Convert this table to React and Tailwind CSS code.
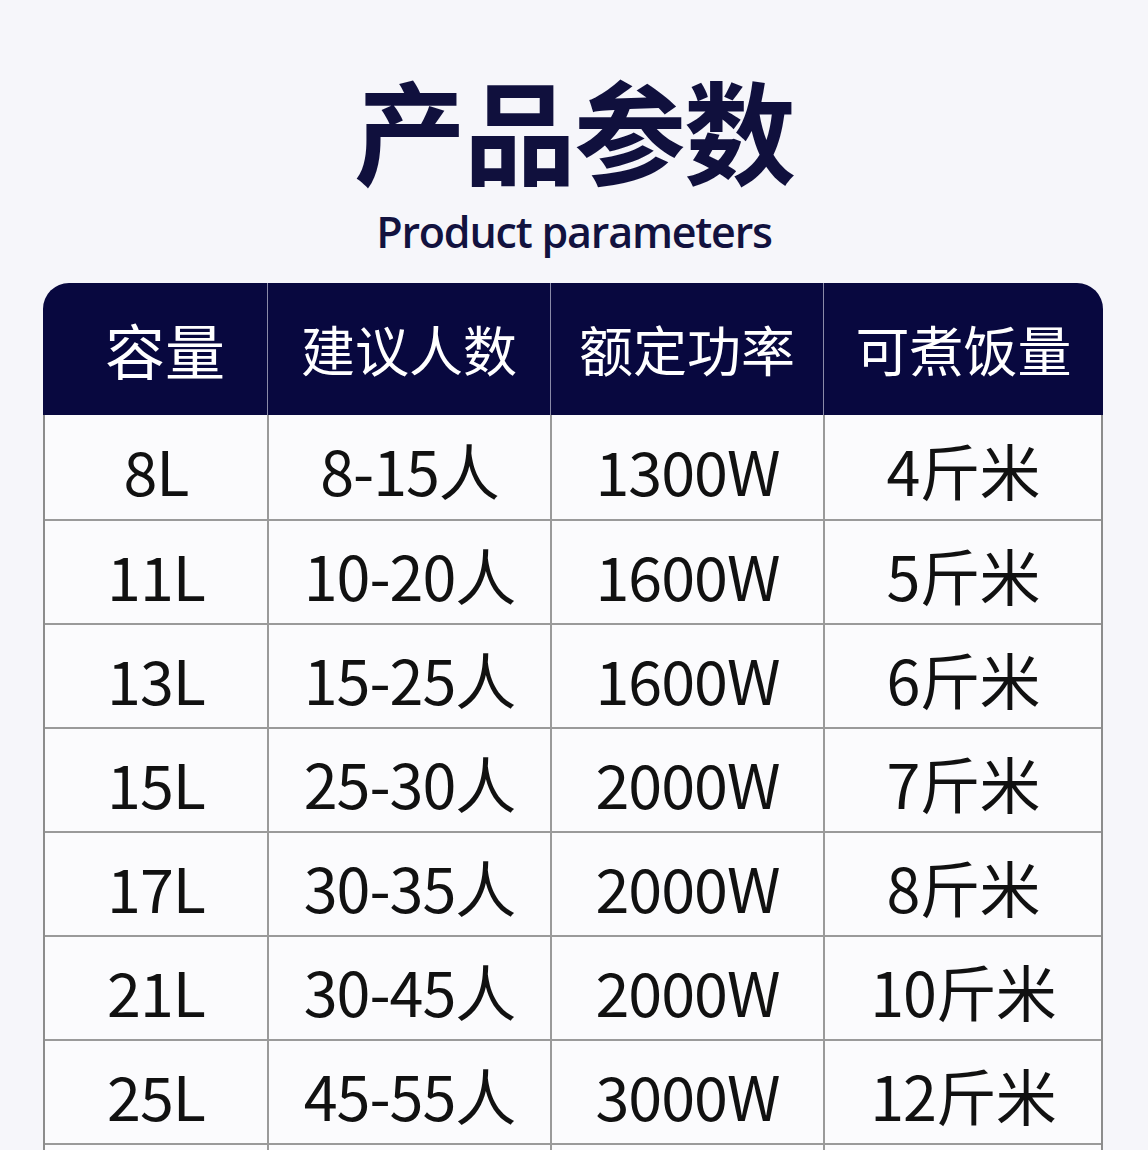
import React from "react";

const rows = [
  ["8L", "8-15人", "1300W", "4斤米"],
  ["11L", "10-20人", "1600W", "5斤米"],
  ["13L", "15-25人", "1600W", "6斤米"],
  ["15L", "25-30人", "2000W", "7斤米"],
  ["17L", "30-35人", "2000W", "8斤米"],
  ["21L", "30-45人", "2000W", "10斤米"],
  ["25L", "45-55人", "3000W", "12斤米"],
  ["", "", "", ""],
];

const heads = ["容量", "建议人数", "额定功率", "可煮饭量"];
const font = { fontFamily: '"Noto Sans CJK SC", "Noto Sans", sans-serif' };

export default function App() {
  return (
    <div className="w-[1148px] h-[1150px] overflow-hidden bg-[#f6f6fa]" style={font}>
      <div className="flex flex-col items-center pt-[64px]">
        <div className="text-[112px] font-bold leading-[1.15] text-[#10103d] tracking-[-2px]">
          产品参数
        </div>
        <div
          className="mt-[15px] text-[43px] font-semibold text-[#12123f] leading-[1.1] tracking-[-1.2px]"
          style={{ fontFamily: '"Open Sans", sans-serif' }}
        >
          Product parameters
        </div>
      </div>
      <div className="ml-[43px] mt-[28px] w-[1060px]">
        <div className="grid grid-cols-[224px_283px_273px_280px] h-[132px] bg-[#08083f] rounded-t-[26px] overflow-hidden">
          {heads.map((h, i) => (
            <div
              key={i}
              className={`flex items-center justify-center text-white leading-none ${i === 0 ? "text-[60px] pl-[20px]" : "text-[54px]"} ${i > 0 ? "border-l border-[#8a8aa8]" : ""}`}
            >
              {h}
            </div>
          ))}
        </div>
        <div className="border-l-2 border-r-2 border-[#8c8c8c] bg-[#fbfbfd]">
          {rows.map((r, ri) => (
            <div
              key={ri}
              className={`grid grid-cols-[222px_283px_273px_278px] h-[104px] ${ri > 0 ? "border-t-2 border-[#9a9a9a]" : ""}`}
            >
              {r.map((c, ci) => (
                <div
                  key={ci}
                  className={`flex items-center justify-center pt-[4px] text-[61px] leading-none text-[#111] tracking-[-1px] ${ci > 0 ? "border-l-2 border-[#9a9a9a]" : ""}`}
                >
                  {c}
                </div>
              ))}
            </div>
          ))}
        </div>
      </div>
    </div>
  );
}
